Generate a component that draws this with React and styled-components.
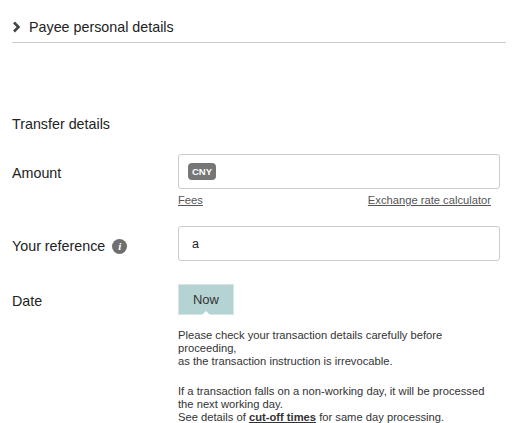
import React from "react";
import styled, { createGlobalStyle } from "styled-components";

const G = createGlobalStyle`
  body { margin: 0; background: #fff; font-family: "Liberation Sans", Arial, sans-serif; color: #222; }
`;
const Page = styled.div`padding: 0 13px 0 12px; width: 519px; box-sizing: border-box;`;
const Header = styled.div`
  display: flex; align-items: center; gap: 8px; height: 43px; padding-top: 12px; box-sizing: border-box;
  border-bottom: 1px solid #ccc; font-size: 14.3px; color: #222;
`;
const SectionTitle = styled.div`margin-top: 73px; font-size: 14.3px; color: #222;`;
const Row = styled.div`display: grid; grid-template-columns: 166px 322px; margin-top: ${p => p.$mt}px;`;
const Label = styled.div`font-size: 14.3px; padding-top: ${p => p.$pt}px; display: flex; align-items: center; gap: 7px; height: fit-content;`;
const Input = styled.div`
  height: 35px; border: 1px solid #ccc; border-radius: 3px; box-sizing: border-box;
  display: flex; align-items: center; padding-left: ${p => p.$pl}px; font-size: 12.5px; color: #222;
`;
const Badge = styled.span`background: #767676; color: #fff; font-size: 9.5px; font-weight: bold; border-radius: 4px; padding: 3px 4px;`;
const Links = styled.div`display: flex; justify-content: space-between; padding-right: 9px; margin-top: 5px; font-size: 11.2px;`;
const Link = styled.a`color: #555; text-decoration: underline;`;
const Info = styled.span`
  width: 15px; height: 15px; border-radius: 50%; background: #6f6f6f; color: #fff;
  font: italic bold 11px "Liberation Serif", serif; display: inline-flex; align-items: center; justify-content: center;
`;
const NowBtn = styled.div`
  position: relative; width: 56px; height: 31px; background: #b6d3d3; border: 1px solid #d6e4e4; box-sizing: border-box;
  display: flex; align-items: center; justify-content: center; font-size: 13px; color: #333;
  &::after { content: ""; position: absolute; bottom: -1px; left: 50%; margin-left: -4px;
    border: 4px solid transparent; border-bottom-color: #fff; border-top: 0; }
`;
const Note = styled.p`font-size: 11.2px; line-height: 13px; margin: ${p => p.$mt}px 0 0; color: #333;`;

export default function App() {
  return (
    <Page>
      <G />
      <Header>
        <svg width="9" height="12" viewBox="0 0 9 12"><path d="M2 1.5 L6.5 6 L2 10.5" stroke="#444" strokeWidth="2.6" fill="none" /></svg>
        Payee personal details
      </Header>
      <SectionTitle>Transfer details</SectionTitle>
      <Row $mt={22}>
        <Label $pt={11}>Amount</Label>
        <div>
          <Input $pl={9}><Badge>CNY</Badge></Input>
          <Links><Link>Fees</Link><Link>Exchange rate calculator</Link></Links>
        </div>
      </Row>
      <Row $mt={20}>
        <Label $pt={12}>Your reference <Info>i</Info></Label>
        <Input $pl={13}>a</Input>
      </Row>
      <Row $mt={23}>
        <Label $pt={9}>Date</Label>
        <div>
          <NowBtn>Now</NowBtn>
          <Note $mt={14}>Please check your transaction details carefully before proceeding,<br />as the transaction instruction is irrevocable.</Note>
          <Note $mt={17}>If a transaction falls on a non-working day, it will be processed<br />the next working day.<br />See details of <b><u>cut-off times</u></b> for same day processing.</Note>
        </div>
      </Row>
    </Page>
  );
}
